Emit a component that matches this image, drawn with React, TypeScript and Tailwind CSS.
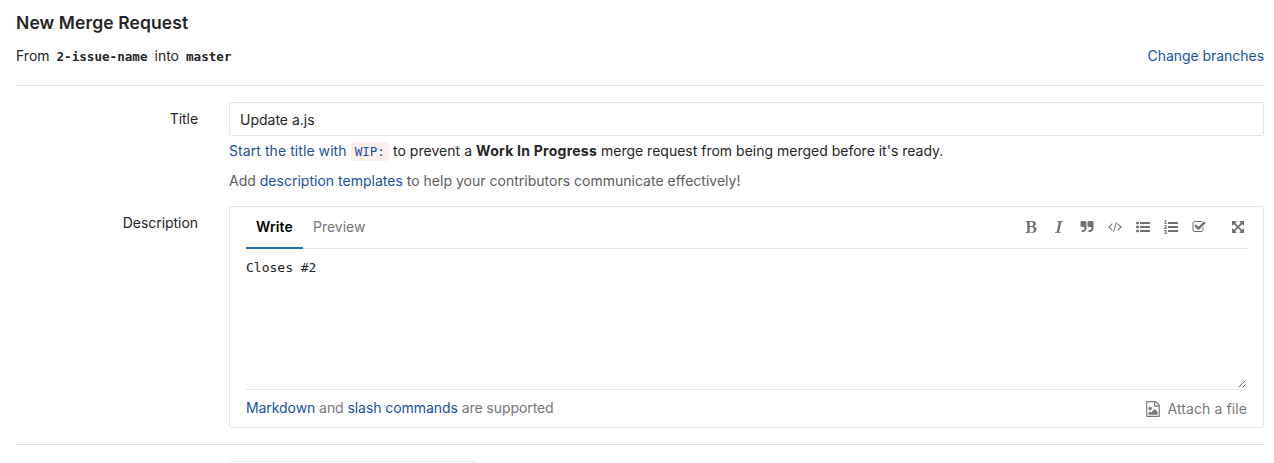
import type { ReactNode } from "react";

const icons = {
  bold: "M747 1521q74 32 140 32 376 0 376-335 0-114-41-180-27-44-61.5-74t-67.5-46.5-80.5-25-84-10.5-94.5-2q-73 0-101 10 0 53-.5 159t-.5 158q0 8-1 67.5t-.5 96.5 4.5 83.5 12 66.5zm-14-746q42 7 109 7 82 0 143-13t110-44.5 74.5-89.5 25.5-142q0-70-29-122.5t-79-82-108-43.5-124-14q-50 0-130 13 0 50 4 151t4 152q0 27-.5 80t-.5 79q0 46 1 69zm-541 889l2-94q15-4 85-16t106-27q7-12 12.5-27t8.5-33.5 5.5-32.5 3-37.5.5-34v-65.5q0-982-22-1025-4-8-22-14.5t-44.5-11-49.5-7-48.5-4.5-30.5-3l-4-83q98-2 340-11.5t373-9.5q23 0 68.5.5t67.5.5q70 0 136.5 13t128.5 42 108 71 74 104.5 28 137.5q0 52-16.5 95.5t-39 72-64.5 57.5-73 45-84 40q154 35 256.5 134t102.5 248q0 100-35 179.5t-93.5 130.5-138 85.5-163.5 48.5-176 14q-44 0-132-3t-132-3q-106 0-307 11t-231 12z",
  italic: "M384 1662l17-85q22-7 61.5-16.5t72-19 59.5-23.5q28-35 41-101 1-7 62-289t114-543.5 52-296.5v-25q-24-13-54.5-18.5t-69.5-8-58-5.5l19-103q33 2 120 6.5t149.5 7 120.5 2.5q48 0 98.5-2.5t121-7 98.5-6.5q-5 39-19 89-30 10-101.5 28.5t-108.5 33.5q-8 19-14 42.5t-9 40-7.5 45.5-6.5 42q-27 148-87.5 419.5t-77.5 355.5q-2 9-13 58t-20 90-16 83.5-6 57.5l1 18q17 4 185 31-3 44-16 99-11 0-32.5 1.5t-32.5 1.5q-29 0-87-10t-86-10q-138-2-206-2-51 0-143 9t-121 11z",
  quote: "M832 320v704q0 104-40.5 198.5t-109.5 163.5-163.5 109.5-198.5 40.5h-64q-26 0-45-19t-19-45v-128q0-26 19-45t45-19h64q106 0 181-75t75-181v-32q0-40-28-68t-68-28h-224q-80 0-136-56t-56-136v-384q0-80 56-136t136-56h384q80 0 136 56t56 136zm896 0v704q0 104-40.5 198.5t-109.5 163.5-163.5 109.5-198.5 40.5h-64q-26 0-45-19t-19-45v-128q0-26 19-45t45-19h64q106 0 181-75t75-181v-32q0-40-28-68t-68-28h-224q-80 0-136-56t-56-136v-384q0-80 56-136t136-56h384q80 0 136 56t56 136z",
  code: "M617 1399l-50 50q-10 10-23 10t-23-10l-466-466q-10-10-10-23t10-23l466-466q10-10 23-10t23 10l50 50q10 10 10 23t-10 23l-393 393 393 393q10 10 10 23t-10 23zm591-1067l-373 1291q-4 13-15.5 19.5t-23.5 2.5l-62-17q-13-4-19.5-15.5t-2.5-24.5l373-1291q4-13 15.5-19.5t23.5-2.5l62 17q13 4 19.5 15.5t2.5 24.5zm657 651l-466 466q-10 10-23 10t-23-10l-50-50q-10-10-10-23t10-23l393-393-393-393q-10-10-10-23t10-23l50-50q10-10 23-10t23 10l466 466q10 10 10 23t-10 23z",
  listUl: "M384 1408q0 80-56 136t-136 56-136-56-56-136 56-136 136-56 136 56 56 136zm0-512q0 80-56 136t-136 56-136-56-56-136 56-136 136-56 136 56 56 136zm1408 416v192q0 13-9.5 22.5t-22.5 9.5h-1216q-13 0-22.5-9.5t-9.5-22.5v-192q0-13 9.5-22.5t22.5-9.5h1216q13 0 22.5 9.5t9.5 22.5zm-1408-928q0 80-56 136t-136 56-136-56-56-136 56-136 136-56 136 56 56 136zm1408 416v192q0 13-9.5 22.5t-22.5 9.5h-1216q-13 0-22.5-9.5t-9.5-22.5v-192q0-13 9.5-22.5t22.5-9.5h1216q13 0 22.5 9.5t9.5 22.5zm0-512v192q0 13-9.5 22.5t-22.5 9.5h-1216q-13 0-22.5-9.5t-9.5-22.5v-192q0-13 9.5-22.5t22.5-9.5h1216q13 0 22.5 9.5t9.5 22.5z",
  listOl: "M381 1620q0 80-54.5 126t-135.5 46q-106 0-172-66l57-88q49 45 106 45 29 0 50.5-14.5t21.5-42.5q0-64-105-56l-26-56q8-10 32.5-43.5t42.5-54 37-38.5v-1q-16 0-48.5 1t-48.5 1v53h-106v-152h333v88l-95 115q51 12 81 49t30 88zm2-627v159h-362q-6-36-6-54 0-51 23.5-93t56.5-68 66-47.5 56.5-43.5 23.5-45q0-25-14.5-38.5t-39.5-13.5q-46 0-81 58l-85-59q24-51 71.5-79.5t105.5-28.5q73 0 123 41.5t50 112.5q0 50-34 91.5t-75 64.5-75.5 50.5-35.5 52.5h127v-60h105zm1409 319v192q0 13-9.5 22.5t-22.5 9.5h-1216q-13 0-22.5-9.5t-9.5-22.5v-192q0-14 9-23t23-9h1216q13 0 22.5 9.5t9.5 22.5zm-1408-899v99h-335v-99h107q0-41 .5-122t.5-121v-12h-2q-8 17-50 54l-71-76 136-127h106v404h108zm1408 387v192q0 13-9.5 22.5t-22.5 9.5h-1216q-13 0-22.5-9.5t-9.5-22.5v-192q0-14 9-23t23-9h1216q13 0 22.5 9.5t9.5 22.5zm0-512v192q0 13-9.5 22.5t-22.5 9.5h-1216q-13 0-22.5-9.5t-9.5-22.5v-192q0-13 9.5-22.5t22.5-9.5h1216q13 0 22.5 9.5t9.5 22.5z",
  check: "M1472 930v318q0 119-84.5 203.5t-203.5 84.5h-832q-119 0-203.5-84.5t-84.5-203.5v-832q0-119 84.5-203.5t203.5-84.5h832q63 0 117 25 15 7 18 23 3 17-9 29l-49 49q-10 10-23 10-3 0-9-2-23-6-45-6h-832q-66 0-113 47t-47 113v832q0 66 47 113t113 47h832q66 0 113-47t47-113v-254q0-13 9-22l64-64q10-10 23-10 6 0 12 3 20 8 20 29zm231-489l-814 814q-24 24-57 24t-57-24l-430-430q-24-24-24-57t24-57l110-110q24-24 57-24t57 24l263 263 647-647q24-24 57-24t57 24l110 110q24 24 24 57t-24 57z",
  expand: "M1411 541l-355 355 355 355 144-144q29-31 70-14 39 17 39 59v448q0 26-19 45t-45 19h-448q-42 0-59-40-17-39 14-69l144-144-355-355-355 355 144 144q31 30 14 69-17 40-59 40h-448q-26 0-45-19t-19-45v-448q0-42 40-59 39-17 69 14l144 144 355-355-355-355-144 144q-19 19-45 19-12 0-24-5-40-17-40-59v-448q0-26 19-45t45-19h448q42 0 59 40 17 39-14 69l-144 144 355 355 355-355-144-144q-31-30-14-69 17-40 59-40h448q26 0 45 19t19 45v448q0 42-39 59-13 5-25 5-26 0-45-19z",
  image: "M1596 380q28 28 48 76t20 88v1152q0 40-28 68t-68 28h-1344q-40 0-68-28t-28-68v-1600q0-40 28-68t68-28h896q40 0 88 20t76 48zm-444-244v376h376q-10-29-22-41l-313-313q-12-12-41-22zm384 1528v-1024h-416q-40 0-68-28t-28-68v-416h-768v1536h1280zm-128-448v320h-1024v-192l192-192 128 128 384-384zm-832-192q-80 0-136-56t-56-136 56-136 136-56 136 56 56 136-56 136-136 56z",
};

function Icon({ name, className = "h-3.5 w-3.5", box = "0 0 1792 1792" }: { name: keyof typeof icons; className?: string; box?: string }) {
  return (
    <svg viewBox={box} className={className} fill="currentColor" aria-hidden="true">
      <path d={icons[name]} />
    </svg>
  );
}

function Link({ children, className = "" }: { children: ReactNode; className?: string }) {
  return <a href="#" className={`text-[#1b4fa0] ${className}`}>{children}</a>;
}

function Row({ label, children }: { label: string; children: ReactNode }) {
  return (
    <div className="flex">
      <div className="w-[182px] shrink-0 pt-1.5 text-right leading-[21px] tracking-[-0.05px]">{label}</div>
      <div className="ml-[31px] min-w-0 flex-1">{children}</div>
    </div>
  );
}

const tools: (keyof typeof icons)[] = ["bold", "italic", "quote", "code", "listUl", "listOl", "check"];
const mono = "font-['DejaVu_Sans_Mono',monospace]";

export default function App() {
  return (
    <main className="h-[463px] overflow-hidden bg-white pr-2.5 pl-4 font-['Inter',sans-serif] text-[14px] leading-[21px] whitespace-nowrap text-[#262626]">
      <h1 className="pt-2.5 text-[17.5px] leading-[25px] font-semibold tracking-[0.1px]">New Merge Request</h1>
      <div className="mt-2.5 flex justify-between">
        <div>
          From <code className={`${mono} ml-[3px] text-[12.6px] font-bold`}>2-issue-name</code>
          <span className="mx-[7px]">into</span>
          <code className={`${mono} text-[12.6px] font-bold`}>master</code>
        </div>
        <Link className="tracking-[-0.04px]">Change branches</Link>
      </div>
      <hr className="mt-[18px] mb-4 border-[#dfdfdf]" />

      <Row label="Title">
        <div className="flex h-[34px] items-center rounded-xs border border-[#e3e3e3] px-2.5">Update a.js</div>
        <p className="mt-1">
          <Link className="tracking-[0.07px]">
            Start the title with <code className={`${mono} rounded-[3px] bg-[#fdeeee] px-1 py-0.5 text-[12.6px] tracking-normal`}>WIP:</code>
          </Link>{" "}
          <span className="tracking-[0.04px]">to prevent a </span>
          <strong className="font-bold tracking-[0.25px]">Work In Progress</strong> merge request from being merged before it's ready.
        </p>
        <p className="mt-2 tracking-[0.01px] text-[#5c5c5c]">
          Add <Link>description templates</Link> to help your contributors communicate effectively!
        </p>
      </Row>

      <div className="mt-[15px]">
        <Row label="Description">
          <section className="h-[222px] rounded-[3px] border border-[#e3e3e3] px-4">
            <div className="flex h-[42px] items-stretch justify-between border-b border-[#e5e5e5]">
              <div className="flex">
                <button className="-mb-px border-b-2 border-[#1f6fb8] px-2.5 pb-0.5 font-semibold tracking-[0.14px] text-black">Write</button>
                <button className="px-2.5 pb-[3px] text-[#777]">Preview</button>
              </div>
              <div className="flex items-center gap-3.5 pr-[2.5px] pb-px text-[#707070]">
                {tools.map((name) => (
                  <Icon key={name} name={name} box={name === "code" ? "0 64 1920 1792" : undefined} />
                ))}
                <Icon name="expand" className="ml-[11px] h-3.5 w-3.5" />
              </div>
            </div>
            <div className={`${mono} relative h-[141px] border-b border-[#e5e5e5] pt-[9px] text-[13px] leading-[19px] text-[#222]`}>
              Closes #2
              <svg className="absolute right-0 bottom-0 h-2.5 w-2.5" viewBox="0 0 10 10" stroke="#666" strokeWidth="1" aria-hidden="true">
                <path d="M1.5 8.5 8.5 1.5M5.5 8.5 8.5 5.5" />
              </svg>
            </div>
            <div className="flex h-[38px] items-center justify-between text-[#777]">
              <span className="pb-[3px] tracking-[-0.07px]">
                <Link>Markdown</Link> and <Link>slash commands</Link> are supported
              </span>
              <span className="flex items-center gap-1.5 pb-px tracking-[0.1px]">
                <Icon name="image" className="h-4 w-4" />
                Attach a file
              </span>
            </div>
          </section>
        </Row>
      </div>

      <hr className="mt-4 mb-4 border-[#dfdfdf]" />
      <div className="ml-[213px] h-[34px] w-[250px] rounded-xs border border-[#e3e3e3]" />
    </main>
  );
}
